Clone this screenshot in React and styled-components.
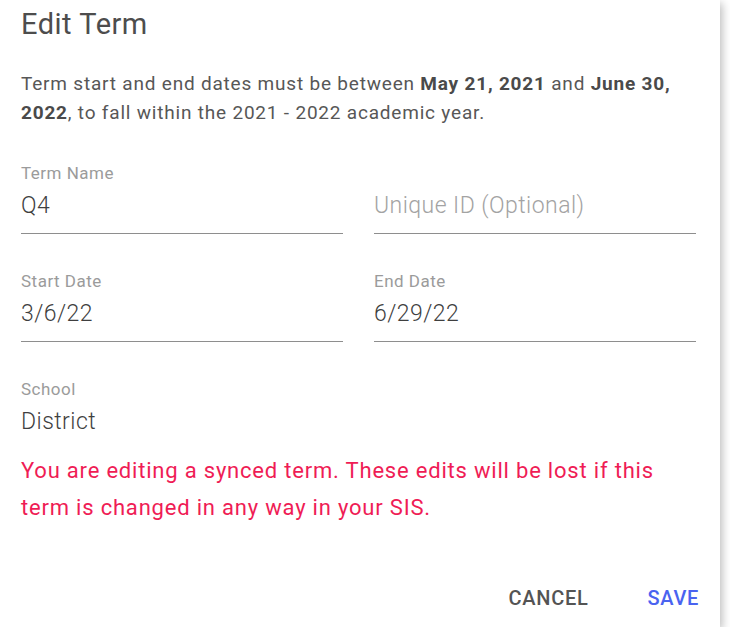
import React from "react";
import styled, { createGlobalStyle } from "styled-components";

const GlobalStyle = createGlobalStyle`
  html, body {
    margin: 0;
    background: #ffffff;
  }
  body {
    font-family: Roboto, "Liberation Sans", sans-serif;
  }
`;

const fields = [
  [
    { label: "Term Name", value: "Q4" },
    { label: "", value: "Unique ID (Optional)", placeholder: true },
  ],
  [
    { label: "Start Date", value: "3/6/22" },
    { label: "End Date", value: "6/29/22" },
  ],
];

const App = () => {
  return (
    <>
      <GlobalStyle />
      <Dialog>
        <Title>Edit Term</Title>
        <Intro>
          Term start and end dates must be between <b>May 21, 2021</b> and{" "}
          <b>June 30, 2022</b>, to fall within the 2021 - 2022 academic year.
        </Intro>

        {fields.map((row, i) => (
          <Row key={i}>
            {row.map((f) => (
              <Field key={f.value} $underline>
                <Label>{f.label}</Label>
                <Value $placeholder={f.placeholder}>{f.value}</Value>
              </Field>
            ))}
          </Row>
        ))}

        <Row>
          <Field>
            <Label>School</Label>
            <Value>District</Value>
          </Field>
        </Row>

        <Warning>
          You are editing a synced term. These edits will be lost if this term is
          changed in any way in your SIS.
        </Warning>

        <Actions>
          <Button>Cancel</Button>
          <Button $primary>Save</Button>
        </Actions>
      </Dialog>
    </>
  );
};

export default App;

const Dialog = styled.div`
  width: 720px;
  height: 627px;
  box-sizing: border-box;
  padding: 6px 24px 0 21px;
  background: #fff;
  display: flex;
  flex-direction: column;
  box-shadow: 2px 3px 9px rgba(0, 0, 0, 0.28);
`;

const Title = styled.h2`
  margin: 0;
  font-size: 29px;
  line-height: 36px;
  font-weight: 400;
  letter-spacing: 0.5px;
  color: #4d4d4d;
`;

const Intro = styled.p`
  margin: 27px 0 0;
  font-size: 19px;
  line-height: 29px;
  letter-spacing: 0.8px;
  color: #575757;

  b {
    font-weight: 700;
    color: #4a4a4a;
  }
`;

const Row = styled.div`
  display: grid;
  grid-template-columns: 1fr 1fr;
  column-gap: 31px;
  margin-top: 37px;

  &:first-of-type {
    margin-top: 36px;
  }
`;

const Field = styled.div`
  display: flex;
  flex-direction: column;
  gap: 9px;
  padding-bottom: ${(p) => (p.$underline ? "13px" : "0")};
  border-bottom: ${(p) => (p.$underline ? "1px solid #8e8e8e" : "none")};
`;

const Label = styled.div`
  font-size: 17px;
  line-height: 20px;
  height: 20px;
  font-weight: 400;
  letter-spacing: 0.5px;
  color: #9b9b9b;
`;

const Value = styled.div`
  font-size: 23px;
  line-height: 28px;
  font-weight: 300;
  letter-spacing: 0.45px;
  color: ${(p) => (p.$placeholder ? "#a3a3a3" : "#3f3f3f")};
`;

const Warning = styled.p`
  margin: 16px 0 0;
  font-size: 22px;
  line-height: 37px;
  letter-spacing: 0.8px;
  color: #ef1c55;
`;

const Actions = styled.div`
  margin-top: auto;
  margin-right: -11px;
  padding-bottom: 9px;
  display: flex;
  justify-content: flex-end;
  gap: 43px;
`;

const Button = styled.button`
  border: none;
  background: none;
  padding: 8px 8px;
  font-family: Roboto, "Liberation Sans", sans-serif;
  font-size: 20px;
  line-height: 24px;
  font-weight: 500;
  text-transform: uppercase;
  letter-spacing: 0.7px;
  color: ${(p) => (p.$primary ? "#4a63f0" : "#545454")};
  cursor: pointer;
`;
